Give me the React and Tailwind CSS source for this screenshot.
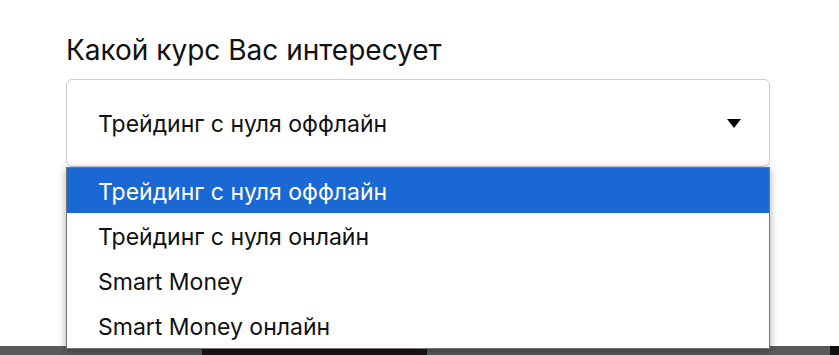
export default function App() {
  const options = [
    'Трейдинг с нуля оффлайн',
    'Трейдинг с нуля онлайн',
    'Smart Money',
    'Smart Money онлайн',
  ];

  return (
    <div className="relative h-[355px] w-full overflow-hidden bg-white" style={{ fontFamily: 'Inter, "Noto Sans", sans-serif' }}>
      <div className="pl-[66px] pt-[32px] pr-[69px]">
        <p className="text-[28px] leading-[36px] text-[#111]">Какой курс Вас интересует</p>

        <div className="relative mt-[11px]">
          <div className="flex h-[88px] items-center justify-between rounded-[6px] border border-[#cccccc] pl-[31px] pr-[28px]">
            <span className="pt-[2px] text-[23px] text-[#111]">Трейдинг с нуля оффлайн</span>
            <svg width="14" height="9" viewBox="0 0 14 9">
              <path d="M0 0 L14 0 L7 9 Z" fill="#000" />
            </svg>
          </div>

          {/* open option list */}
          <ul className="absolute left-0 right-0 top-[88px] z-10 border border-[#767676] bg-white shadow-[0_2px_8px_rgba(0,0,0,0.35)]">
            {options.map((o, i) => (
              <li
                key={o}
                className={`flex h-[45px] items-center pl-[31px] pt-[4px] text-[23px] ${i === 0 ? 'bg-[#1a68d3] text-white' : 'text-[#111]'}`}
              >
                {o}
              </li>
            ))}
          </ul>
        </div>
      </div>

      {/* next section peeking at the bottom */}
      <div className="absolute bottom-0 left-0 right-0 flex h-[9px] bg-[#5a5a5a]">
        <div className="ml-[202px] w-[225px] bg-[#1c1414]" />
        <div className="flex-1" />
        <div className="w-[9px] bg-[#111]" />
      </div>
    </div>
  );
}
